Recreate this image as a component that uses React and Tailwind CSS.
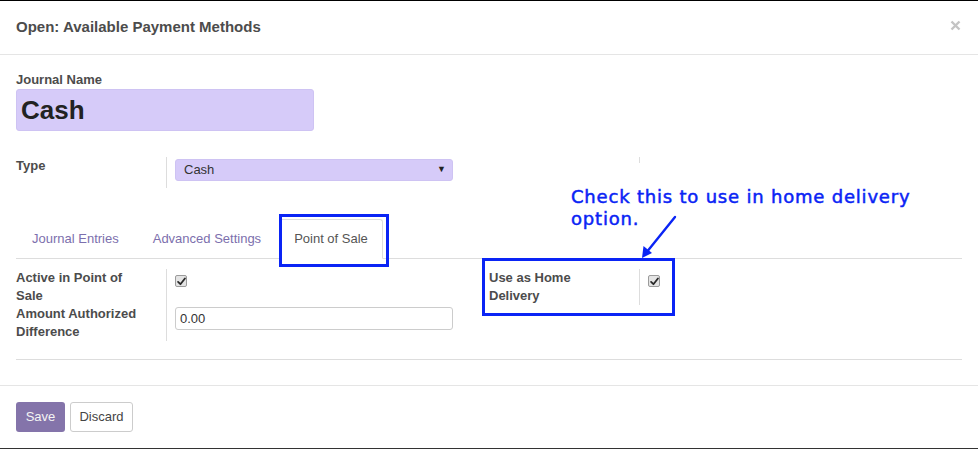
import React from "react";

function Check() {
  return (
    <span className="flex h-[12px] w-[12px] items-center justify-center rounded-[2px] border border-[#9b9b9b] bg-[#e4e4e4]">
      <svg width="9" height="9" viewBox="0 0 10 10">
        <path d="M1.2 5.4 L3.8 8 L8.8 1.6" fill="none" stroke="#2a2a2a" strokeWidth="2" strokeLinecap="round" strokeLinejoin="round" />
      </svg>
    </span>
  );
}

export default function App() {
  const label = "text-[13px] leading-[18px] font-bold text-[#4c4c4c]";
  return (
    <div className="relative flex h-[449px] w-[978px] flex-col border-t border-b border-t-black border-b-[#333] bg-white font-['Liberation_Sans',Arial,sans-serif]">
      {/* header */}
      <div className="flex h-[54px] shrink-0 items-center justify-between border-b border-[#e5e5e5] pl-4 pr-[17px]">
        <div className="text-[15px] font-bold text-[#4c4c4c]">Open: Available Payment Methods</div>
        <svg width="11" height="11" viewBox="0 0 11 11" className="mb-[5px]">
          <path d="M1.5 1.5 L9.5 9.5 M9.5 1.5 L1.5 9.5" stroke="#c4c4c4" strokeWidth="2.4" />
        </svg>
      </div>

      {/* body */}
      <div className="h-[330px] shrink-0 px-4 pt-[16px]">
        <div className={label}>Journal Name</div>
        <div className="flex h-[42px] w-[298px] items-center rounded-[3px] border border-[#cec3f3] bg-[#d6cbf9] pl-[4px] text-[26px] font-bold text-[#222]">
          Cash
        </div>

        <div className="mt-[26px] flex">
          <div className="flex w-[473px]">
            <div className={`w-[150px] ${label}`}>Type</div>
            <div className="h-[31px] border-l border-[#ddd] pl-[8px] pt-[2px]">
              <div className="flex h-[22px] w-[278px] items-center justify-between rounded-[3px] border border-[#cec3f3] bg-[#d6cbf9] pl-[8px] pr-[6px] text-[13px] text-[#333]">
                <span>Cash</span>
                <span className="text-[9px] text-[#222]">▼</span>
              </div>
            </div>
          </div>
          <div className="flex w-[473px]">
            <div className="w-[150px]" />
            <div className="h-[6px] border-l border-[#ddd]" />
          </div>
        </div>

        {/* tabs */}
        <div className="mt-[31px] flex h-[40px] border-b border-[#ddd] text-[13px]">
          <div className="-mb-px mr-[2px] flex h-[40px] items-center border border-transparent px-[15px] text-[#7c6fad]">Journal Entries</div>
          <div className="-mb-px mr-[2px] flex h-[40px] items-center border border-transparent px-[15px] text-[#7c6fad]">Advanced Settings</div>
          <div className="-mb-px flex h-[40px] items-center rounded-t-[3px] border border-[#ddd] border-b-white bg-white px-[14px] text-[#555]">Point of Sale</div>
        </div>

        <div className="flex pt-[10px]">
          <div className="flex w-[473px]">
            <div className="w-[150px]">
              <div className={`h-[36px] w-[130px] ${label}`}>Active in Point of Sale</div>
              <div className={`h-[36px] w-[130px] ${label}`}>Amount Authorized Difference</div>
            </div>
            <div className="h-[72px] border-l border-[#ddd] pl-[8px]">
              <div className="h-[35px] pt-[6px]">
                <Check />
              </div>
              <div className="pt-[3px]">
                <div className="flex h-[23px] w-[278px] items-center rounded-[3px] border border-[#ccc] pl-[4px] text-[13px] text-[#333]">0.00</div>
              </div>
            </div>
          </div>
          <div className="flex w-[473px]">
            <div className="w-[150px]">
              <div className={`w-[130px] ${label}`}>Use as Home Delivery</div>
            </div>
            <div className="h-[36px] border-l border-[#ddd] pl-[8px] pt-[6px]">
              <Check />
            </div>
          </div>
        </div>

        <div className="mt-[18px] border-t border-[#ddd]" />
      </div>

      {/* footer */}
      <div className="flex h-[63px] shrink-0 items-start gap-[5px] border-t border-[#e5e5e5] px-4 pt-[16px] text-[13px]">
        <button className="h-[30px] w-[49px] rounded-[3px] bg-[#8474aa] text-[#f4f4f4]">Save</button>
        <button className="h-[30px] w-[63px] rounded-[3px] border border-[#ccc] bg-white text-[#444]">Discard</button>
      </div>

      {/* annotations */}
      <div className="pointer-events-none absolute left-[279px] top-[213px] h-[53px] w-[110px] border-[3px] border-[#0a24f5]" />
      <div className="pointer-events-none absolute left-[482px] top-[257px] h-[58px] w-[193px] border-[3px] border-[#0a24f5]" />
      <div className="pointer-events-none absolute left-[571px] top-[185px] font-['DejaVu_Sans',sans-serif] text-[18px] leading-[22px] tracking-[0.8px] text-[#0a24f5] [-webkit-text-stroke:0.5px_#0a24f5]">
        Check this to use in home delivery
        <br />
        option.
      </div>
      <svg className="pointer-events-none absolute left-[630px] top-[205px]" width="60" height="60" viewBox="0 0 60 60">
        <path d="M45 11 L16 47" stroke="#0a24f5" strokeWidth="2.4" strokeLinecap="round" />
        <polygon points="12,52 13.5,40 22,47" fill="#0a24f5" />
      </svg>
    </div>
  );
}
